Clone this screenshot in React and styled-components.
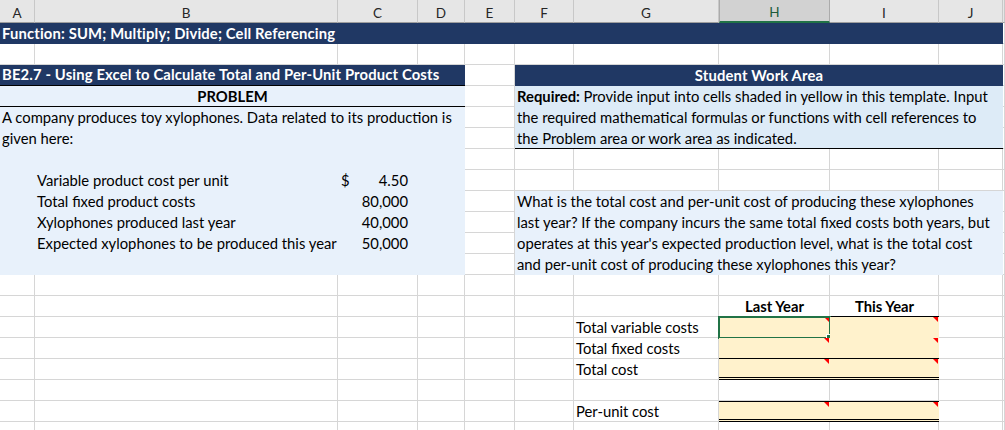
import React from 'react';
import styled, { createGlobalStyle, css } from 'styled-components';

const NAVY = '#203864';
const PANEL_BLUE = '#e8f1fb';
const NOTE_BLUE = '#ddebf7';
const INPUT_YELLOW = '#fff2cc';
const GRID_LINE = '#d6d6d6';
const FONT = `'Lato', 'Liberation Sans', sans-serif`;

const columns = [
  { name: 'A', width: 35 },
  { name: 'B', width: 303 },
  { name: 'C', width: 80 },
  { name: 'D', width: 47 },
  { name: 'E', width: 50 },
  { name: 'F', width: 59 },
  { name: 'G', width: 145 },
  { name: 'H', width: 111, active: true },
  { name: 'I', width: 109 },
  { name: 'J', width: 64 },
  { name: '', width: null }
];

const ROW_COUNT = 20;

const problemData = [
  { label: 'Variable product cost per unit', value: '4.50', currency: true },
  { label: 'Total fixed product costs', value: '80,000' },
  { label: 'Xylophones produced last year', value: '40,000' },
  { label: 'Expected xylophones to be produced this year', value: '50,000' }
];

const descriptionLines = [
  'A company produces toy xylophones. Data related to its production is',
  'given here:'
];

const requiredLines = [
  'Provide input into cells shaded in yellow in this template. Input',
  'the required mathematical formulas or functions with cell references to',
  'the Problem area or work area as indicated.'
];

const questionLines = [
  'What is the total cost and per-unit cost of producing these xylophones',
  'last year? If the company incurs the same total fixed costs both years, but',
  "operates at this year's expected production level, what is the total cost",
  'and per-unit cost of producing these xylophones this year?'
];

const costRows = [
  { row: 15, label: 'Total variable costs' },
  { row: 16, label: 'Total fixed costs', bottom: 'single' },
  { row: 17, label: 'Total cost', bottom: 'double' },
  { row: 19, label: 'Per-unit cost', top: true, bottom: 'double' }
];

const GlobalStyle = createGlobalStyle`
  html, body {
    margin: 0;
    padding: 0;
    background: #ffffff;
    overflow: hidden;
  }
  body {
    font-family: ${FONT};
    color: #000000;
  }
`;

// places an item on the sheet grid; rows are counted from the first data row
const place = css`
  grid-column: ${p => p.$col} / span ${p => p.$span || 1};
  grid-row: ${p => p.$row + 1} / span ${p => p.$rows || 1};
`;

const Sheet = styled.div`
  display: grid;
  grid-template-columns: ${columns
    .map(c => (c.width ? `${c.width}px` : '1fr'))
    .join(' ')};
  grid-template-rows: 23px repeat(${ROW_COUNT}, 21px);
  width: 1005px;
  height: 430px;
  overflow: hidden;
  font-size: 14.8px;
`;

const HeaderCell = styled.div`
  grid-row: 1;
  grid-column: ${p => p.$col};
  display: flex;
  align-items: center;
  justify-content: center;
  padding-top: 3px;
  box-sizing: border-box;
  background: ${p => (p.$active ? '#d2d2d2' : '#e6e6e6')};
  border-right: 1px solid ${p => (p.$active ? '#ababab' : '#c8c8c8')};
  border-left: ${p => (p.$active ? '1px solid #ababab' : 'none')};
  border-bottom: ${p => (p.$active ? '2px solid #217346' : '1px solid #9e9e9e')};
  font-size: 13.5px;
  color: ${p => (p.$active ? '#1d5b3a' : '#262626')};
`;

const GridCell = styled.div`
  ${place};
  border-right: 1px solid ${GRID_LINE};
  border-bottom: 1px solid ${GRID_LINE};
`;

const Banner = styled.div`
  ${place};
  display: flex;
  align-items: flex-end;
  justify-content: ${p => (p.$center ? 'center' : 'flex-start')};
  box-sizing: border-box;
  padding: 0 2px 2px;
  background: ${NAVY};
  color: #ffffff;
  font-weight: 700;
  letter-spacing: 0.15px;
  white-space: nowrap;
  border-bottom: ${p => (p.$ruled ? '1px solid #000000' : 'none')};
`;

const Fill = styled.div`
  ${place};
  background: ${p => p.$fill};
`;

const TextBlock = styled.div`
  ${place};
  box-sizing: border-box;
  padding: 0 2px;
  background: ${p => p.$fill || 'transparent'};
  border-bottom: ${p => (p.$ruled ? '1px solid #000000' : 'none')};
`;

const Line = styled.div`
  height: 21px;
  line-height: 21px;
  white-space: nowrap;
`;

const Strong = styled.span`
  font-weight: 700;
`;

const Caption = styled.div`
  ${place};
  box-sizing: border-box;
  line-height: 21px;
  text-align: center;
  font-weight: 700;
  white-space: nowrap;
  border-bottom: ${p => (p.$ruled ? '1px solid #000000' : 'none')};
`;

const Label = styled.div`
  ${place};
  line-height: 21px;
  padding-left: 2px;
  white-space: nowrap;
`;

const Amount = styled.div`
  ${place};
  display: flex;
  line-height: 21px;
  padding: 0 10px 0 3px;
  white-space: nowrap;
`;

const Figure = styled.span`
  margin-left: auto;
`;

const InputCell = styled.div`
  ${place};
  position: relative;
  box-sizing: border-box;
  background: ${INPUT_YELLOW};
  border-top: ${p => (p.$top ? '1px solid #000000' : 'none')};
  border-bottom: ${p =>
    p.$bottom === 'double'
      ? '3px double #000000'
      : p.$bottom === 'single'
      ? '1px solid #000000'
      : 'none'};
`;

const NoteMark = styled.span`
  position: absolute;
  top: 0;
  right: 1px;
  width: 0;
  height: 0;
  border-top: 5px solid #ff0000;
  border-left: 5px solid transparent;
`;

const Selection = styled.div`
  position: absolute;
  top: -1px;
  left: -1px;
  right: -1px;
  bottom: -1px;
  border: 2px solid #217346;
  pointer-events: none;
`;

const FillHandle = styled.span`
  position: absolute;
  right: -4px;
  bottom: -4px;
  width: 5px;
  height: 5px;
  background: #217346;
  border: 1px solid #ffffff;
`;

export default function App() {
  const blanks = [];
  for (let r = 1; r <= ROW_COUNT; r++) {
    for (let c = 1; c <= columns.length; c++) {
      blanks.push(<GridCell key={`${r}-${c}`} $row={r} $col={c} />);
    }
  }

  return (
    <>
      <GlobalStyle />
      <Sheet>
        {columns.map((column, i) => (
          <HeaderCell key={column.name || 'tail'} $col={i + 1} $active={column.active}>
            {column.name}
          </HeaderCell>
        ))}

        {blanks}

        <Banner $row={1} $col={1} $span={10}>
          Function: SUM; Multiply; Divide; Cell Referencing
        </Banner>

        <Banner $row={3} $col={1} $span={4} $ruled>
          BE2.7 - Using Excel to Calculate Total and Per-Unit Product Costs
        </Banner>
        <Fill $row={4} $col={1} $span={4} $rows={9} $fill={PANEL_BLUE} />
        <Caption $row={4} $col={1} $span={4} $ruled>
          PROBLEM
        </Caption>
        <TextBlock $row={5} $col={1} $span={4} $rows={2}>
          {descriptionLines.map(line => (
            <Line key={line}>{line}</Line>
          ))}
        </TextBlock>
        {problemData.map((item, i) => (
          <React.Fragment key={item.label}>
            <Label $row={8 + i} $col={2}>
              {item.label}
            </Label>
            <Amount $row={8 + i} $col={3}>
              {item.currency && <span>$</span>}
              <Figure>{item.value}</Figure>
            </Amount>
          </React.Fragment>
        ))}

        <Banner $row={3} $col={6} $span={5} $center>
          Student Work Area
        </Banner>
        <TextBlock $row={4} $col={6} $span={5} $rows={3} $fill={NOTE_BLUE} $ruled>
          {requiredLines.map((line, i) => (
            <Line key={line}>
              {i === 0 && <Strong>Required: </Strong>}
              {line}
            </Line>
          ))}
        </TextBlock>
        <TextBlock $row={9} $col={6} $span={5} $rows={4} $fill={PANEL_BLUE}>
          {questionLines.map(line => (
            <Line key={line}>{line}</Line>
          ))}
        </TextBlock>

        <Caption $row={14} $col={8} $ruled>
          Last Year
        </Caption>
        <Caption $row={14} $col={9} $ruled>
          This Year
        </Caption>

        {costRows.map(item => (
          <React.Fragment key={item.label}>
            <Label $row={item.row} $col={7}>
              {item.label}
            </Label>
            {[8, 9].map(col => (
              <InputCell
                key={col}
                $row={item.row}
                $col={col}
                $top={item.top}
                $bottom={item.bottom}
              >
                <NoteMark />
                {item.row === 15 && col === 8 && (
                  <Selection>
                    <FillHandle />
                  </Selection>
                )}
              </InputCell>
            ))}
          </React.Fragment>
        ))}
      </Sheet>
    </>
  );
}
